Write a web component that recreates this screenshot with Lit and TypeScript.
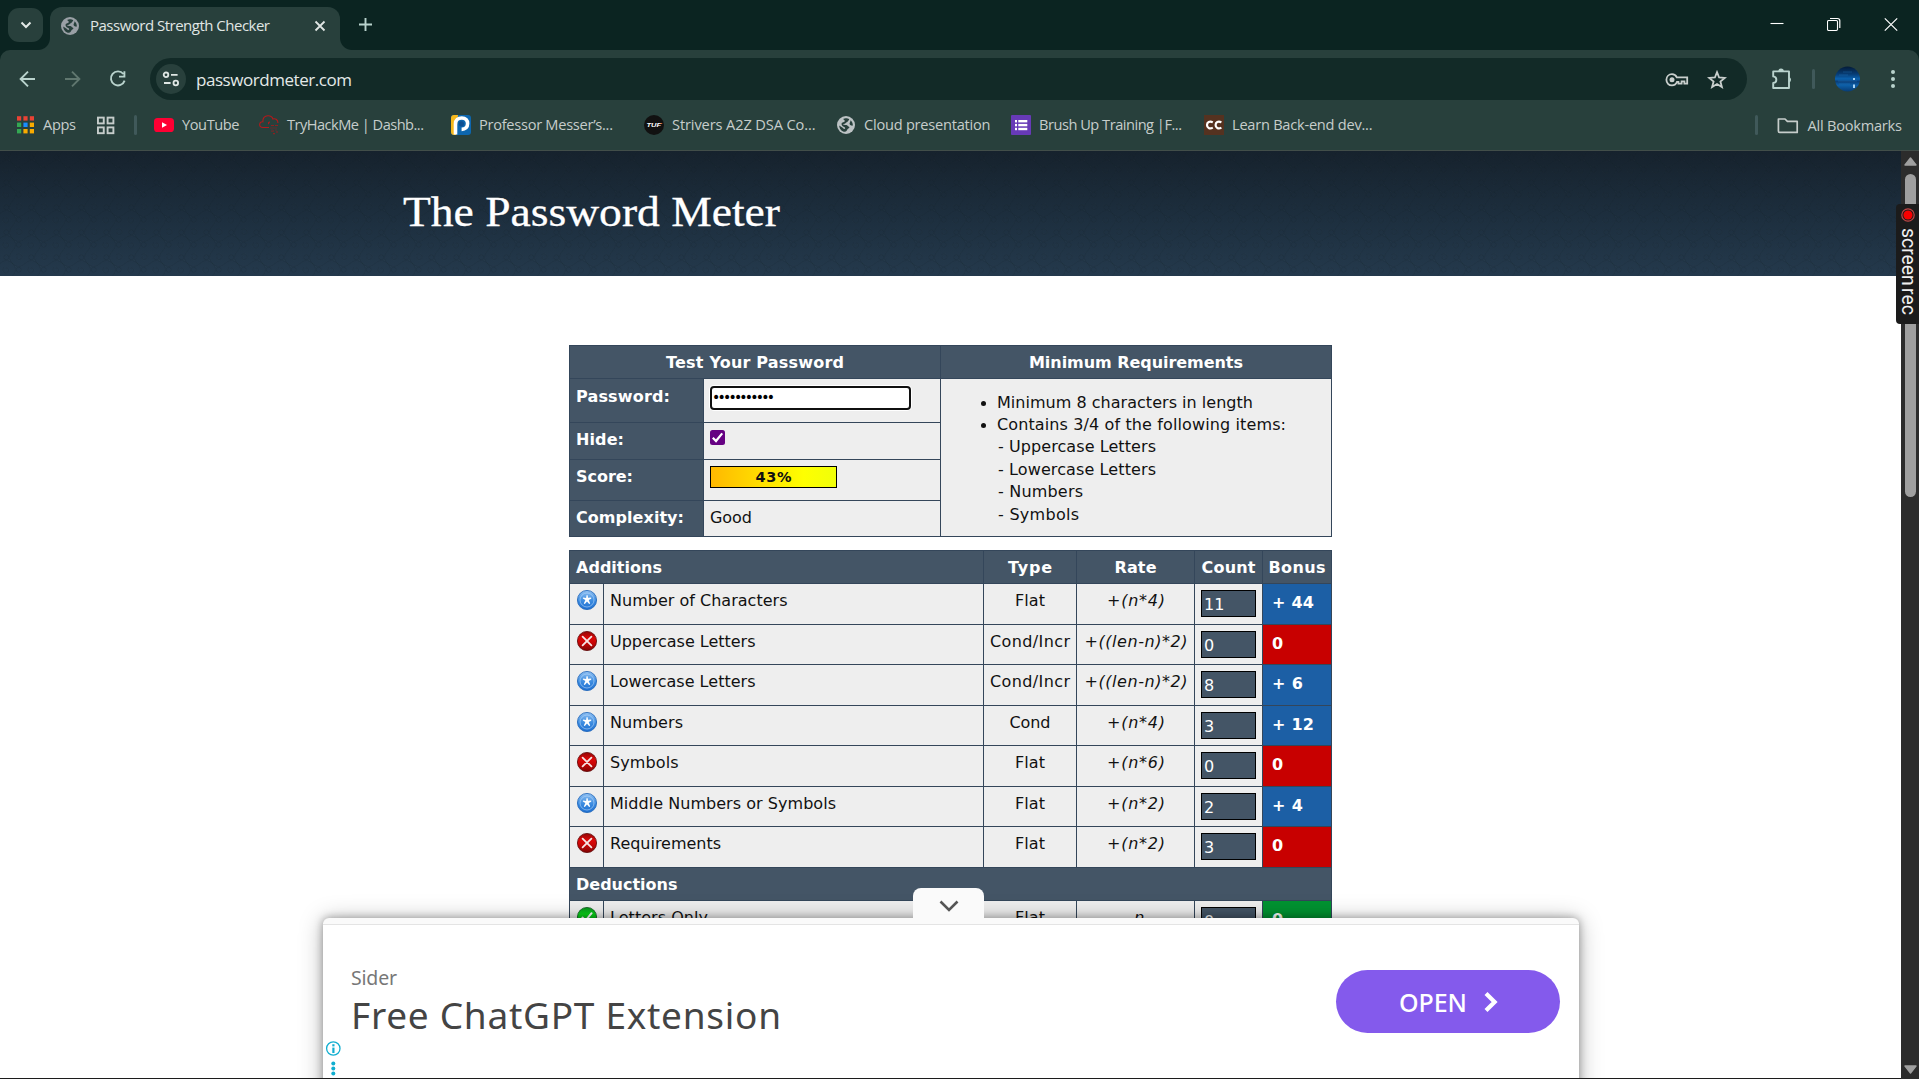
import { LitElement, html, svg, css } from "lit";
import { customElement, property } from "lit/decorators.js";

/** Inline text whose tracking is adjusted so that it spans a set width. */
@customElement("fit-text")
class FitText extends LitElement {
  static styles = css`
    :host { display: inline-block; white-space: pre; }
    .run { display: inline-block; white-space: pre; }
  `;
  @property() text = "";
  @property({ type: Number }) w = 0;

  updated() {
    const run = this.renderRoot.querySelector(".run") as HTMLElement;
    run.style.letterSpacing = "0";
    if (!this.w || this.text.length < 2) return;
    const natural = run.getBoundingClientRect().width;
    const spacing = (this.w - natural) / (this.text.length - 1);
    run.style.letterSpacing = `${spacing.toFixed(3)}px`;
    run.style.marginRight = `${(-spacing).toFixed(3)}px`;
  }
  render() {
    return html`<span class="run">${this.text}</span>`;
  }
}

const t = (text: string, w = 0) => html`<fit-text .text=${text} .w=${w}></fit-text>`;

const globe = (fill: string) => html`<svg width="20" height="20" viewBox="0 0 20 20">
  <circle cx="10" cy="10" r="9" fill=${fill}/>
  <path d="M9.6 3.2 C13 3.2 14.2 4.6 12.4 5.6 C11.6 6.4 12 7 10.6 7.2 C9.6 7.6 9.8 8.6 8.6 8.8 L7.2 9.2 C7 10 8.8 9.8 10.2 9.9 C11.8 10 11.6 11.2 12.6 11.4 C14 11.8 13.4 13.2 12.2 13.4 C11 14 11.2 16.4 9 16.8 C5.6 16.5 3.4 13.8 3.2 10.4 L7.4 13.2 C7.6 14.4 9 14.2 9.2 13.2 C9.4 12.2 7 11.8 6.4 11 C5.4 9.8 5.2 8.6 6 7.8 C7 7 8.6 7.4 8.8 6 C8.8 5 7.2 5 7.4 3.8 Z M14.6 5.2 C16.3 6.6 17 8.6 16.8 10.6 C15.6 10.8 14 10.4 13.6 9 C13.3 7.7 14.4 7.4 14.6 5.2Z" fill="#28403c"/>
</svg>`;

const icons = {
  globe: globe("#bcc2c4"),
  youtube: html`<svg width="20" height="20" viewBox="0 0 20 20"><rect y="3" width="20" height="14" rx="3.6" fill="#ff0033"/><path d="M8 7.2 L13 10 L8 12.8Z" fill="#fff"/></svg>`,
  cloud: html`<svg width="20" height="20" viewBox="0 0 20 20" fill="none" stroke="#b3191b" stroke-width="1.1">
    <path d="M10 9.2 C9 8 9.5 7 11 7 M10 12.5 H4 C1.6 12.5 0.5 11 0.7 9.2 C0.9 7.4 2.2 6.6 3.9 6.8 C3.6 3 5.6 0.8 8.8 0.7 C11.6 0.6 13.4 2 13.9 4 C16.6 3.2 19 4.8 18.9 8"/>
    <path d="M12 10.5 H15 M16 10.5 H19 M12 16 H15 M14 18.6 H16 M17 17 H19" stroke="#8c2020"/><path d="M11 13 H18 M12 15 H14 M16 15 H18" stroke="#4b3534" stroke-width="1.6"/></svg>`,
  messer: html`<svg width="20" height="20" viewBox="0 0 20 20"><rect width="20" height="20" rx="3" fill="#0d66ae"/><path d="M3 0 H7 L5 20 H3 C1 20 0 19 0 17 V3 C0 1 1 0 3 0Z" fill="#f6b81c"/><path d="M4.5 19.5 V9 C4.5 4.8 7.2 3 10.8 3 C14.6 3 16.6 5.4 16.6 8.6 C16.6 12 14.4 14.4 10.6 14.4" fill="none" stroke="#fff" stroke-width="3.6"/><circle cx="10.4" cy="8.8" r="2.6" fill="#0d4f92"/></svg>`,
  tuf: html`<svg width="20" height="20" viewBox="0 0 20 20"><circle cx="10" cy="10" r="10" fill="#111"/><text x="2.4" y="12.2" font-family="Liberation Sans, Arial, sans-serif" font-size="6.2" font-weight="700" font-style="italic" fill="#fff" textLength="14.6" lengthAdjust="spacingAndGlyphs">TUF</text><rect x="16.6" y="8" width="1.6" height="1" fill="#d4622a"/></svg>`,
  forms: html`<svg width="20" height="20" viewBox="0 0 20 20"><rect width="20" height="20" rx="1" fill="#673ab7"/><g fill="#fff"><rect x="4" y="5" width="2" height="2.4"/><rect x="4" y="8.9" width="2" height="2.4"/><rect x="4" y="12.8" width="2" height="2.4"/><rect x="7.3" y="5" width="9" height="2.4"/><rect x="7.3" y="8.9" width="9" height="2.4"/><rect x="7.3" y="12.8" width="9" height="2.4"/></g></svg>`,
  cc: html`<svg width="20" height="20" viewBox="0 0 20 20"><rect width="20" height="20" fill="#553220"/><g fill="none" stroke="#fff" stroke-width="2.2"><path d="M8.8 7.4 C5.6 5.6 3 7.4 3 10 C3 12.7 5.6 14.4 8.8 12.6"/><path d="M17.4 7.4 C14.2 5.6 11.6 7.4 11.6 10 C11.6 12.7 14.2 14.4 17.4 12.6"/></g></svg>`,
};

/** slot is the distance to the next bookmark. */
const bookmarks = [
  { icon: icons.youtube, label: "YouTube", w: 57.5, slot: 105 },
  { icon: icons.cloud, label: "TryHackMe | Dashb...", w: 137, slot: 192 },
  { icon: icons.messer, label: "Professor Messer’s...", w: 134, slot: 193 },
  { icon: icons.tuf, label: "Strivers A2Z DSA Co...", w: 143.5, slot: 192 },
  { icon: icons.globe, label: "Cloud presentation", w: 126.5, slot: 175 },
  { icon: icons.forms, label: "Brush Up Training |F...", w: 143, slot: 193 },
  { icon: icons.cc, label: "Learn Back-end dev...", w: 140.5, slot: 168 },
];

const badges = {
  star: svg`<circle cx="10" cy="10" r="9.6" fill="url(#blue)" stroke="#1a62b8" stroke-width=".8"/><circle cx="10" cy="10" r="7" fill="none" stroke="#b4d6f8" stroke-opacity=".6" stroke-width="1"/><path d="M9.5 5.2 H10.7 L11 7.8 L14.2 7.6 V8.8 L11.7 9.9 L13.2 13.4 L12.2 14 L10 11.4 L7.8 14 L6.8 13.4 L8.4 9.9 L5.8 8.6 L6.2 7.6 L9.1 7.9Z" fill="#fff"/>`,
  fail: svg`<circle cx="10" cy="10" r="9.6" fill="url(#red)" stroke="#5f0505" stroke-width=".8"/><path d="M5.6 5.6 L14.4 14.4 M14.4 5.6 L5.6 14.4" stroke="#f6e6e6" stroke-width="1.8" stroke-linecap="round"/>`,
  pass: svg`<circle cx="10" cy="10" r="9.6" fill="url(#green)" stroke="#0a5a1a" stroke-width=".8"/><path d="M5.4 10.6 L8.6 13.6 L14.6 6.2" fill="none" stroke="#fff" stroke-width="2" stroke-linecap="round"/>`,
};
const badge = (kind: keyof typeof badges) => html`<svg class="badge" width="20" height="20" viewBox="0 0 20 20"><defs>
  <linearGradient id="blue" x1="0" y1="0" x2="0" y2="1"><stop offset="0" stop-color="#8fc0f2"/><stop offset=".55" stop-color="#3b8be0"/><stop offset="1" stop-color="#1f6fd0"/></linearGradient>
  <linearGradient id="red" x1="0" y1="0" x2="0" y2="1"><stop offset="0" stop-color="#900606"/><stop offset=".35" stop-color="#dc0808"/><stop offset=".6" stop-color="#c80606"/><stop offset="1" stop-color="#800303"/></linearGradient>
  <linearGradient id="green" x1="0" y1="0" x2="0" y2="1"><stop offset="0" stop-color="#0b8f20"/><stop offset=".35" stop-color="#08d818"/><stop offset="1" stop-color="#0b9a20"/></linearGradient>
  </defs>${badges[kind]}</svg>`;

type Row = [keyof typeof badges, string, number, string, number, string, number, string, string, number];
const additions: Row[] = [
  ["star", "Number of Characters", 177.5, "Flat", 30, "+(n*4)", 58, "11", "+ 44", 42],
  ["fail", "Uppercase Letters", 145.5, "Cond/Incr", 80, "+((len-n)*2)", 103, "0", "0", 0],
  ["star", "Lowercase Letters", 145.5, "Cond/Incr", 80, "+((len-n)*2)", 103, "8", "+ 6", 31],
  ["star", "Numbers", 73, "Cond", 41, "+(n*4)", 58, "3", "+ 12", 42],
  ["fail", "Symbols", 68.5, "Flat", 30, "+(n*6)", 58, "0", "0", 0],
  ["star", "Middle Numbers or Symbols", 226, "Flat", 30, "+(n*2)", 58, "2", "+ 4", 31],
  ["fail", "Requirements", 111, "Flat", 30, "+(n*2)", 58, "3", "0", 0],
];
const deductions: Row[] = [["pass", "Letters Only", 98, "Flat", 30, "-n", 17, "0", "0", 0]];

@customElement("app-root")
class AppRoot extends LitElement {
  static styles = css`
    :host { display: block; width: 1919px; height: 1079px; overflow: hidden; position: relative; background: #fff; }
    * { box-sizing: border-box; }
    svg { display: block; flex: none; }
    .window { display: flex; flex-direction: column; height: 1079px; }
    .ui { font-family: "Open Sans", "Noto Sans", sans-serif; color: #c6cdcb; }

    .strip { height: 50px; flex: none; background: #0b2421; display: flex; align-items: flex-start; }
    .search { width: 35px; height: 34px; margin: 8px 7px 0 8px; border-radius: 11px; background: #28403c; display: grid; place-items: center; }
    .tab { width: 290px; height: 43px; margin-top: 7px; border-radius: 12px 12px 0 0; background: #28403c; display: flex; align-items: center; padding: 0 14px 6px 10px; position: relative; font-size: 15px; color: #e0e6e4; }
    .tab::before, .tab::after { content: ""; position: absolute; bottom: 0; width: 12px; height: 12px; }
    .tab::before { left: -12px; background: radial-gradient(circle at 0 0, transparent 11.5px, #28403c 12.5px); }
    .tab::after { right: -12px; background: radial-gradient(circle at 100% 0, transparent 11.5px, #28403c 12.5px); }
    .tab-title { margin-left: 10px; flex: 1; line-height: 20px; padding-bottom: 1px; }
    .plus { margin: 18px 0 0 19px; }
    .controls { margin-left: auto; display: flex; gap: 43px; padding: 17px 21px 0 0; }

    .toolbar-back { background: #0b2421; flex: none; }
    .toolbar { height: 58px; background: #28403c; border-radius: 10px 10px 0 0; display: flex; align-items: center; padding-left: 17px; }
    .nav { display: flex; gap: 25px; width: 133px; }
    .omnibox { width: 1597px; height: 42px; border-radius: 21px; background: #122a27; display: flex; align-items: center; padding: 0 20px 0 6px; }
    .chip { width: 30px; height: 30px; border-radius: 50%; background: #28403c; display: grid; place-items: center; }
    .url { margin-left: 10px; flex: 1; font-size: 17px; line-height: 24px; color: #e3e9e7; padding-top: 1px; }
    .url-icons { display: flex; gap: 18px; align-items: center; padding-top: 1px; }
    .actions { display: flex; align-items: center; margin-left: 24px; }
    .divider { width: 3px; height: 20px; border-radius: 2px; background: #40595a; flex: none; }

    .bookmarks { height: 43px; flex: none; background: #28403c; border-bottom: 1px solid #424e49; display: flex; align-items: flex-start; padding: 7px 17px 0 17px; font-size: 14.6px; line-height: 20px; }
    .bookmarks fit-text { height: 20px; margin-top: -1px; }
    .bm { display: flex; gap: 8px; flex: none; }
    .all { margin-left: auto; display: flex; }

    .viewport { flex: 1; display: flex; min-height: 0; border-bottom: 1px solid #1c1c1c; background: #fff; }
    .page { flex: 1; overflow: hidden; font-family: "DejaVu Sans", Verdana, sans-serif; font-size: 16px; line-height: 21px; color: #111; }
    .hero { height: 125px; display: grid; background: linear-gradient(#16222d, #1d2f3f 55%, #24394c); }
    .hero > * { grid-area: 1 / 1; }
    .hero h1 { margin: 0; padding: 33px 0 0 403px; font: 400 43px/56px "Liberation Serif", Georgia, serif; color: #fff; -webkit-text-stroke: .3px #fff; }
    .hero h1 fit-text { transform: scaleX(1.06); transform-origin: 0 0; }
    .grid { display: grid; gap: 1px; padding: 1px; background: #34465a; width: 763px; margin-left: 569px; }
    .tester { margin-top: 69px; grid-template-columns: 133px 236px 390px; grid-template-rows: 32px 43px 36px 40px 35px; }
    .scores { margin-top: 13px; grid-template-columns: 33px 379px 92px 117px 67px 68px; grid-template-rows: 32px 40px 39px 40px 39px 40px 39px 40px 32px 40px; }
    .cell { background: #eee; padding: 6px 0 0 6px; overflow: hidden; }
    .head { background: #445566; color: #fff; font-weight: 700; padding: 6px 0 0 6px; }
    .low { padding-top: 7px; }
    .center { text-align: center; padding-left: 0; }
    .wide { grid-column: span 2; }
    .full { grid-column: 1 / -1; }
    .span { grid-row: span 4; }
    .icon { padding: 6px 0 0 7px; }
    .rate { font-style: italic; padding-left: 1px; }
    .count { padding: 6px; }
    .field { width: 55px; height: 27px; border: 1px solid #000; background: #445566; color: #fff; padding: 3px 0 0 2px; }
    .bonus { color: #fff; font-weight: 700; padding: 8px 0 0 9px; }
    .star { background: #1c5fa5; }
    .fail { background: #c80000; }
    .pass { background: #009331; }
    .secret { width: 201px; height: 24px; margin-top: 1px; border: 2px solid #101010; border-radius: 4px; background: #fff; box-shadow: 0 0 0 1px #fff; font-size: 14px; line-height: 19px; color: #000; padding-left: 0; }
    .check { margin-top: 1px; }
    .meter { width: 127px; height: 22px; border: 1px solid #000; background: linear-gradient(90deg, #ffb800, #ffff00 74%, #f0ff0a); text-align: center; font-weight: 700; font-size: 14.5px; line-height: 21px; color: #101010; }
    .reqs { margin: 0; padding: 7px 0 0 50px; line-height: 22.4px; }
    .reqs li { height: 22px; }
    .reqs li::marker { font-size: 15px; }
    .reqs div { height: 22.5px; padding-left: 1px; }

    .scrollbar { width: 18px; background: #2c2c2c; display: flex; flex-direction: column; align-items: center; padding: 6px 0 5px 1px; height: 928px; }
    .thumb { width: 11px; height: 323px; margin-top: 8px; border-radius: 6px; background: #9f9f9f; }
    .down { margin-top: auto; }

    .recorder { position: absolute; left: 1896px; top: 204px; width: 23px; height: 120px; border-radius: 4px 0 0 4px; background: #1b1b1b; padding: 4px 0 0 5px; color: #f0f0f0; }
    .recorder div { writing-mode: vertical-rl; font: 400 19.4px/14px Roboto, sans-serif; height: 92px; margin-top: 6px; display: flex; gap: 2px; }

    .ad { position: absolute; left: 323px; top: 918px; width: 1256px; height: 160px; clip-path: inset(-60px -60px 0 -60px); }
    .ad-body { height: 190px; border-radius: 6px 6px 0 0; background: #fff; border-top: 6px solid #fafafa; box-shadow: 0 0 9px rgba(0, 0, 0, .35), 0 2px 24px rgba(0,0,0,.28); display: flex; font-family: "Noto Sans", sans-serif; }
    .ad-rule { border-top: 1px solid #e4e4e4; flex: 1; display: flex; }
    .ad-copy { flex: 1; padding: 40px 0 0 28px; }
    .brand { font-size: 19.5px; line-height: 26px; color: #777; height: 25px; }
    .title { font-size: 37px; line-height: 50px; color: #444; height: 50px; }
    .cta { width: 224px; height: 63px; margin: 45px 19px 0 0; border-radius: 32px; background: #845aec; color: #fff; font-size: 25px; font-weight: 500; line-height: 34px; display: flex; align-items: center; padding: 0 0 0 63px; gap: 17px; }
    .ad-marks { position: absolute; left: 2px; top: 122px; }
    .handle { position: absolute; left: 590px; top: -30px; width: 71px; height: 31px; border-radius: 8px 8px 0 0; background: #fafafa; display: grid; justify-items: center; padding: 12px 0 0 0; }
  `;

  private cells(rows: Row[]) {
    return rows.map(
      ([kind, name, nw, type, tw, rate, rw, count, bonus, bw]) => html`
        <div class="cell icon">${badge(kind)}</div>
        <div class="cell">${t(name, nw)}</div>
        <div class="cell center">${t(type, tw)}</div>
        <div class="cell center rate">${t(rate, rw)}</div>
        <div class="cell count"><div class="field">${t(count)}</div></div>
        <div class="cell bonus ${kind}">${t(bonus, bw)}</div>`
    );
  }

  private chrome() {
    return html`
      <div class="strip ui">
        <div class="search"><svg width="12" height="12" viewBox="0 0 12 12"><path d="M1.5 3.5 L6 8 L10.5 3.5" fill="none" stroke="#e3e9e7" stroke-width="2"/></svg></div>
        <div class="tab">
          ${globe("#9aa0a6")}
          <div class="tab-title">${t("Password Strength Checker", 180)}</div>
          <svg width="12" height="12" viewBox="0 0 12 12"><path d="M1.5 1.5 L10.5 10.5 M10.5 1.5 L1.5 10.5" stroke="#e0e6e4" stroke-width="1.8"/></svg>
        </div>
        <svg class="plus" width="13" height="13" viewBox="0 0 13 13"><path d="M6.5 0 V13 M0 6.5 H13" stroke="#b9d3cd" stroke-width="1.9"/></svg>
        <div class="controls">
          <svg width="14" height="15" viewBox="0 0 14 15"><path d="M0.5 6.5 H13.5" stroke="#fff" stroke-width="1.1"/></svg>
          <svg width="14" height="15" viewBox="0 0 14 15" fill="none" stroke="#fff"><rect x=".5" y="3.5" width="10" height="10" rx="1.2" stroke-width="1.1"/><path d="M3 1.5 H10.5 C12 1.5 12.8 2.3 12.8 3.6 V11" stroke-width="1.2"/></svg>
          <svg width="14" height="15" viewBox="0 0 14 15"><path d="M.8 1.3 L13.2 13.7 M13.2 1.3 L.8 13.7" stroke="#fff" stroke-width="1.2"/></svg>
        </div>
      </div>
      <div class="toolbar-back"><div class="toolbar ui">
        <div class="nav">
          <svg width="20" height="20" viewBox="0 0 20 20"><path d="M18 10 H4 M11 2.6 L3.6 10 L11 17.4" fill="none" stroke="#b9d3cd" stroke-width="1.9"/></svg>
          <svg width="20" height="20" viewBox="0 0 20 20"><path d="M3 10 H17 M10 2.6 L17.4 10 L10 17.4" fill="none" stroke="#60776f" stroke-width="1.9"/></svg>
          <svg width="20" height="20" viewBox="0 0 20 20"><path d="M16.4 5 A7 7 0 1 0 17.6 11.6 M17.4 2.2 V7.6 H12" fill="none" stroke="#b9d3cd" stroke-width="1.9"/></svg>
        </div>
        <div class="omnibox">
          <div class="chip"><svg width="18" height="18" viewBox="0 0 18 18" fill="none" stroke="#dfe6e4" stroke-width="1.8"><circle cx="4" cy="4.8" r="2.3"/><path d="M9 4.8 H15.6 M2 13 H8.6"/><circle cx="13.8" cy="13" r="2.3"/></svg></div>
          <div class="url">${t("passwordmeter.com", 156)}</div>
          <div class="url-icons">
            <svg width="24" height="16" viewBox="0 0 24 16"><path d="M7 2.2 C9.4 2.2 11 3.6 11.8 5.4 H22.2 V11.6 H19.4 V9.4 H16.6 V11.6 H13.4 V9.8 H12 C11.2 12 9.6 13.4 7 13.4 C3.8 13.4 1.4 11 1.4 7.8 C1.4 4.6 3.8 2.2 7 2.2Z" fill="none" stroke="#c9cfcd" stroke-width="1.8"/><circle cx="7" cy="7.8" r="2.5" fill="#c9cfcd"/></svg>
            <svg width="20" height="20" viewBox="0 0 20 20"><path d="M10 2.2 L12.1 7.5 L17.8 7.9 L13.4 11.5 L14.9 17.1 L10 14 L5.1 17.1 L6.6 11.5 L2.2 7.9 L7.9 7.5Z" fill="none" stroke="#c9cfcd" stroke-width="1.8"/></svg>
          </div>
        </div>
        <div class="actions">
          <svg width="22" height="22" viewBox="0 0 22 22"><path d="M2.2 3.4 H18 V20 H2.2 V15 C6.4 14.6 6.4 8.8 2.2 8.4Z" fill="none" stroke="#b9d3cd" stroke-width="1.9" stroke-linejoin="round"/><path d="M7.2 3.4 A2.8 2.8 0 0 1 12.8 3.4Z M18 9 A2.8 2.8 0 0 1 18 14.4Z" fill="#b9d3cd"/></svg>
          <div class="divider" style="margin: 0 20px 0 19px"></div>
          <svg width="26" height="26" viewBox="0 0 26 26"><defs><linearGradient id="sea" x1="0" y1="0" x2="0" y2="1"><stop offset="0" stop-color="#041b38"/><stop offset=".3" stop-color="#073c74"/><stop offset=".5" stop-color="#0b62b0"/><stop offset=".6" stop-color="#0a3f7a"/><stop offset=".75" stop-color="#0d5fa8"/><stop offset="1" stop-color="#083c74"/></linearGradient></defs><circle cx="12.5" cy="13" r="12.5" fill="url(#sea)"/><path d="M4 9 H13 M8 6 H17 M3 15 H22 M4 18 H15" stroke="#2b86d0" stroke-width=".6" opacity=".5"/><path d="M19 12 V14 M19 18.5 V22" stroke="#a9d4f5" stroke-width="2"/></svg>
          <svg width="6" height="22" viewBox="0 0 6 22" style="margin-left: 28.5px" fill="#b9d3cd"><circle cx="3" cy="4" r="2"/><circle cx="3" cy="11" r="2"/><circle cx="3" cy="18" r="2"/></svg>
        </div>
      </div></div>
      <div class="bookmarks ui">
        <div class="bm" style="width: 80px; gap: 9px">
          <svg width="17" height="20" viewBox="0 0 17 20">${[0, 1, 2, 3, 4, 5, 6, 7, 8].map((i) => svg`<rect x=${(i % 3) * 6.4} y=${1.2 + Math.floor(i / 3) * 6.4} width="4.2" height="4.4" fill=${["#ea4335", "#ea4335", "#ea4335", "#34a853", "#1a8cff", "#f9ab00", "#34a853", "#f9ab00", "#f9ab00"][i]}/>`)}</svg>
          ${t("Apps", 33)}
        </div>
        <svg width="18" height="20" viewBox="0 0 18 20" fill="none" stroke="#c6cdcb" stroke-width="1.9"><rect x=".95" y="2.6" width="5.8" height="5.8"/><rect x="10.6" y="2.6" width="5.8" height="5.8"/><rect x=".95" y="12.4" width="5.8" height="5.8"/><rect x="10.6" y="12.4" width="5.8" height="5.8"/></svg>
        <div class="divider" style="margin: 0 17px 0 19px"></div>
        ${bookmarks.map((b) => html`<div class="bm" style="width: ${b.slot}px">${b.icon}${t(b.label, b.w)}</div>`)}
        <div class="all">
          <div class="divider" style="margin-right: 19px"></div>
          <svg width="22" height="20" viewBox="0 0 22 20"><path d="M1.4 15.6 V4 H8 L10.4 6.4 H20.2 V17.4 H2.6 Q1.4 17.4 1.4 16Z" fill="none" stroke="#c6cdcb" stroke-width="1.7" stroke-linejoin="round"/></svg>
          <div style="margin-left: 9px">${t("All Bookmarks", 94.5)}</div>
        </div>
      </div>`;
  }

  render() {
    return html`
      <div class="window">
        ${this.chrome()}
        <div class="viewport">
          <div class="page">
            <div class="hero">
              <svg width="1901" height="125"><defs><pattern id="scroll" width="25" height="25" patternUnits="userSpaceOnUse"><g transform="scale(.625)" fill="none" stroke="#0a141d" stroke-opacity=".16" stroke-width="1.4"><circle cx="10" cy="10" r="4"/><circle cx="30" cy="30" r="4"/><path d="M20 0 C14 6 14 14 20 20 C26 26 26 34 20 40 M0 20 C6 14 14 14 20 20 C26 26 34 26 40 20 M26 6 C32 2 38 8 34 12 C30 16 25 12 28 9 M6 26 C2 32 8 38 12 34 C16 30 12 25 9 28"/></g></pattern></defs><rect width="1901" height="125" fill="url(#scroll)"/></svg>
              <h1>${t("The Password Meter", 377)}</h1>
            </div>
            <div class="grid tester">
              <div class="cell head center wide">${t("Test Your Password", 178)}</div>
              <div class="cell head center">${t("Minimum Requirements", 214)}</div>
              <div class="cell head low">${t("Password:", 94)}</div>
              <div class="cell"><div class="secret">${t("•••••••••••", 63)}</div></div>
              <div class="cell span"><ul class="reqs">
                <li>${t("Minimum 8 characters in length", 256)}</li>
                <li>${t("Contains 3/4 of the following items:", 289)}
                  <div>${t("- Uppercase Letters", 158)}</div>
                  <div>${t("- Lowercase Letters", 158)}</div>
                  <div>${t("- Numbers", 85)}</div>
                  <div>${t("- Symbols", 81)}</div>
                </li>
              </ul></div>
              <div class="cell head">${t("Hide:", 48)}</div>
              <div class="cell"><svg class="check" width="15" height="15" viewBox="0 0 15 15"><rect width="15" height="15" rx="2.5" fill="#650082"/><path d="M2.8 7.8 L6 11 L12.2 3.4" fill="none" stroke="#fff" stroke-width="2.2"/></svg></div>
              <div class="cell head">${t("Score:", 57)}</div>
              <div class="cell"><div class="meter">${t("43%", 36)}</div></div>
              <div class="cell head">${t("Complexity:", 108)}</div>
              <div class="cell">${t("Good", 42)}</div>
            </div>
            <div class="grid scores">
              <div class="cell head wide">${t("Additions", 86)}</div>
              <div class="cell head center">${t("Type", 44)}</div>
              <div class="cell head center">${t("Rate", 42)}</div>
              <div class="cell head center">${t("Count", 54)}</div>
              <div class="cell head center">${t("Bonus", 57)}</div>
              ${this.cells(additions)}
              <div class="cell head full">${t("Deductions", 101.5)}</div>
              ${this.cells(deductions)}
            </div>
          </div>
          <div class="scrollbar">
            <svg width="13" height="9" viewBox="0 0 13 9"><path d="M6.5 1 L12 8 H1Z" fill="#a0a0a0" stroke="#a0a0a0" stroke-width="1.4" stroke-linejoin="round"/></svg>
            <div class="thumb"></div>
            <svg class="down" width="13" height="9" viewBox="0 0 13 9"><path d="M6.5 8 L12 1 H1Z" fill="#a0a0a0" stroke="#a0a0a0" stroke-width="1.4" stroke-linejoin="round"/></svg>
          </div>
        </div>
      </div>
      <div class="ad">
        <div class="ad-body"><div class="ad-rule">
          <div class="ad-copy">
            <div class="brand">${t("Sider", 46)}</div>
            <div class="title">${t("Free ChatGPT Extension", 430)}</div>
          </div>
          <div class="cta">${t("OPEN", 68)}<svg width="14" height="20" viewBox="0 0 14 20"><path d="M2 1.6 L10.6 10 L2 18.4" fill="none" stroke="#fff" stroke-width="4.2"/></svg></div>
        </div></div>
        <svg class="ad-marks" width="17" height="40" viewBox="0 0 17 40" fill="#10aed0"><circle cx="8.3" cy="8.5" r="6.7" fill="none" stroke="#10aed0" stroke-width="1.3"/><rect x="7.3" y="4.2" width="2.2" height="2.2"/><rect x="7.3" y="7.6" width="2.2" height="5.4"/><circle cx="8.3" cy="23.4" r="2"/><circle cx="8.3" cy="28.4" r="2"/><circle cx="8.3" cy="33.4" r="2"/></svg>
        <div class="handle"><svg width="20" height="13" viewBox="0 0 20 13"><path d="M1.5 1.5 L10 10 L18.5 1.5" fill="none" stroke="#555" stroke-width="2.6"/></svg></div>
      </div>
      <div class="recorder">
        <svg width="14" height="14" viewBox="0 0 14 14"><circle cx="7" cy="7" r="6.2" fill="none" stroke="#c04545" stroke-width="1.2"/><circle cx="7" cy="7" r="4.6" fill="#f80000"/></svg>
        <div><span>screen</span><span>rec</span></div>
      </div>`;
  }
}
